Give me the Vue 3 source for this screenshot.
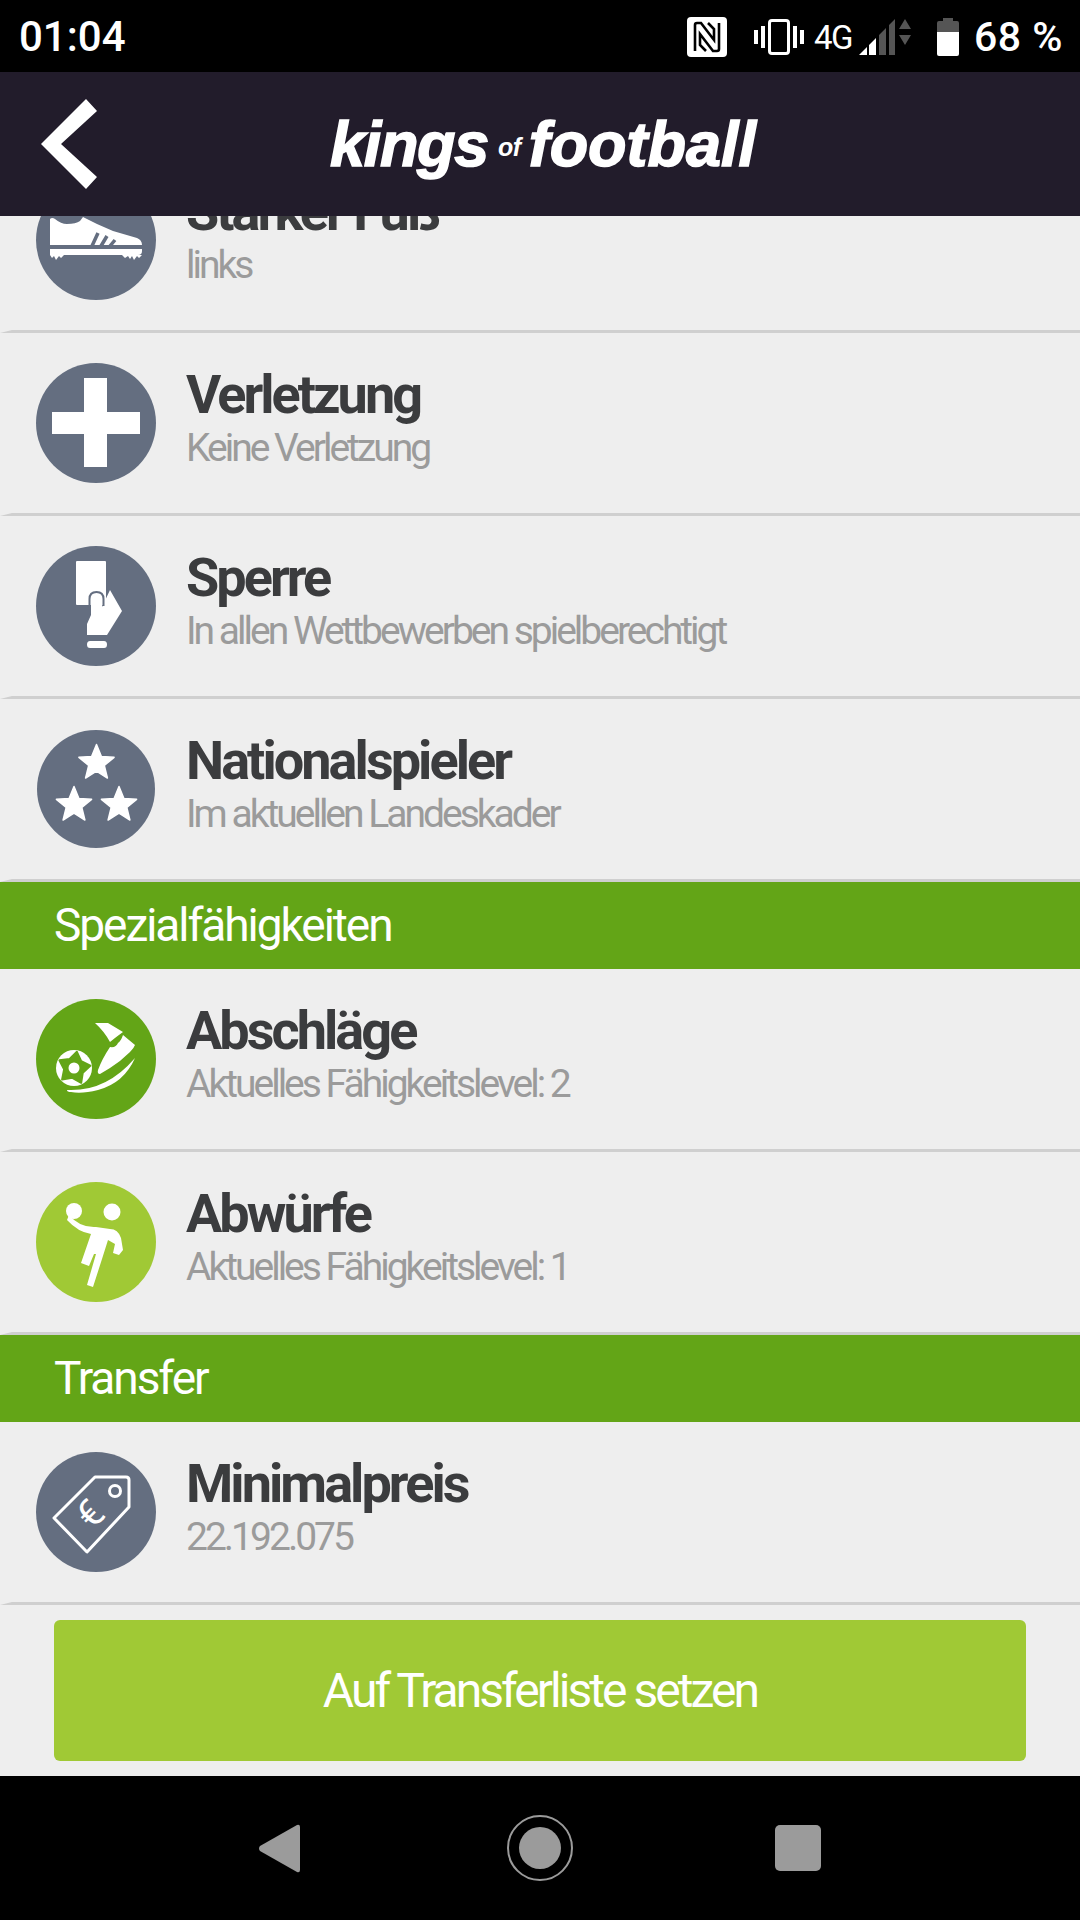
<script setup>
const star = (cx, cy, R = 18.5, r = 8.2, start = -90) => {
  const pts = []
  for (let i = 0; i < 10; i++) {
    const rad = i % 2 ? r : R
    const a = (start * Math.PI) / 180 + (i * Math.PI) / 5
    pts.push(`${(cx + rad * Math.cos(a)).toFixed(1)},${(cy + rad * Math.sin(a)).toFixed(1)}`)
  }
  return pts.join(' ')
}
const stars = [star(60.5, 34), star(38, 76), star(83, 76)]
const ballStar = star(38, 69, 16.5, 10, -80)
</script>

<template>
  <div class="screen">
    <div class="status">
      <span class="time">01:04</span>
      <div class="status-right">
        <svg class="s-nfc" width="40" height="40" viewBox="0 0 40 40">
          <rect width="40" height="40" rx="4" fill="#fff" />
          <path d="M8 34V8q0-2 2-2h4l13 17V12l-6-6M32 6v26q0 2-2 2h-4L13 17v11l6 6" fill="none" stroke="#000" stroke-width="2.6" />
        </svg>
        <svg class="s-vib" width="50" height="36" viewBox="0 0 50 36">
          <path d="M0 11h4v14H0zM7 7h4v22H7zM39 7h4v22h-4zM46 11h4v14h-4z" fill="#fff" />
          <rect x="15.500" y="1.500" width="19" height="33" rx="2.500" fill="none" stroke="#fff" stroke-width="3" />
        </svg>
        <span class="net">4G</span>
        <svg class="s-sig" width="52" height="38" viewBox="0 0 52 38">
          <path d="M0 37L8 29V37zM10 27L17 20V37H10z" fill="#fff" />
          <path d="M20 17L27 10V37H20zM30 7L36 1V37H30z" fill="#555" />
          <path d="M46 1L52 11H40zM46 27L52 17H40z" fill="#555" />
        </svg>
        <svg class="s-bat" width="22" height="38" viewBox="0 0 22 38">
          <path d="M6 0h10v3h4q2 0 2 2v9H0V5q0-2 2-2h4z" fill="#555" />
          <path d="M0 14h22v22q0 2-2 2H2q-2 0-2-2z" fill="#fff" />
        </svg>
        <span class="pct">68 %</span>
      </div>
    </div>

    <header class="topbar">
      <svg class="chev" width="56" height="90" viewBox="0 0 56 90">
        <path d="M45 0L56 12L20 45L56 78L45 90L0 45z" fill="#fff" />
      </svg>
      <div class="logo">
        <span class="lg">kings</span><span class="of">of</span><span class="lg lg2">football</span>
      </div>
    </header>

    <main class="list">
      <div class="row first">
        <div class="ico slate">
          <svg viewBox="0 0 120 120">
            <path d="M14 39Q16 37 19 39Q25 44 31 44Q40 44 44 41L47 37L61 44L77 51L101 58Q106 60 106 65H14z" fill="#fff" />
            <path d="M14 69H106V71Q106 75 102 75H14z" fill="#fff" />
            <path d="M14 75h14l-3 3-2-2-3 4-2-4-2 2-2-3zM86 75h20l-3 3-2-2-3 4-2-4-2 3-2-3-3 2z" fill="#fff" />
            <path d="M62 53l-6 13M71 56l-6 10M79 60l-5 6" stroke="#646e80" stroke-width="3.500" fill="none" />
          </svg>
        </div>
        <div class="txt"><div class="t">Starker Fuß</div><div class="s">links</div></div>
      </div>
      <div class="sep"></div>

      <div class="row">
        <div class="ico slate">
          <svg viewBox="0 0 120 120"><path d="M48 15h23v34h33v22H71v33H48V71H16V49h32z" fill="#fff" /></svg>
        </div>
        <div class="txt"><div class="t">Verletzung</div><div class="s">Keine Verletzung</div></div>
      </div>
      <div class="sep"></div>

      <div class="row">
        <div class="ico slate">
          <svg viewBox="0 0 120 120">
            <rect x="40" y="15" width="30" height="44" rx="1" fill="#fff" />
            <path d="M55 69V53q0-6 5.500-6t5.500 6v8l8-17 12 21-15 24H51V78z" fill="#fff" />
            <path d="M53.500 66V53q0-7 7-7t7 7v7" fill="none" stroke="#646e80" stroke-width="2" />
            <path d="M54 95h14q3 0 3 3.500t-3 3.500H54q-3 0-3-3.500t3-3.500z" fill="#fff" />
          </svg>
        </div>
        <div class="txt"><div class="t">Sperre</div><div class="s">In allen Wettbewerben spielberechtigt</div></div>
      </div>
      <div class="sep"></div>

      <div class="row">
        <div class="ico slate small">
          <svg viewBox="0 0 120 120">
            <polygon v-for="(p, i) in stars" :key="i" :points="p" fill="#fff" stroke="#fff" stroke-width="1.500" stroke-linejoin="round" />
          </svg>
        </div>
        <div class="txt"><div class="t">Nationalspieler</div><div class="s">Im aktuellen Landeskader</div></div>
      </div>
      <div class="sep"></div>

      <div class="band">Spezialfähigkeiten</div>

      <div class="row">
        <div class="ico green">
          <svg viewBox="0 0 120 120">
            <circle cx="38" cy="69" r="18" fill="#fff" />
            <polygon :points="ballStar" fill="#63a517" stroke="#63a517" stroke-width="2" stroke-linejoin="round" />
            <circle cx="38" cy="69" r="5.500" fill="#fff" />
            <path d="M59 24H72L87 33Q80 38 74 43Q68 32 59 24z" fill="#fff" />
            <path d="M87 36L99 46Q98 49 94 53Q85 62 74 69L64 75Q61 75 62 71Q66 60 74 48Q80 49 82 44Q85 42 87 36z" fill="#fff" />
            <path d="M31 91Q70 93 99 59Q88 84 62 91Q46 95 35 93Q31 93 31 91z" fill="#fff" />
          </svg>
        </div>
        <div class="txt"><div class="t">Abschläge</div><div class="s">Aktuelles Fähigkeitslevel: 2</div></div>
      </div>
      <div class="sep"></div>

      <div class="row">
        <div class="ico lime">
          <svg viewBox="0 0 120 120">
            <circle cx="38" cy="29" r="8" fill="#fff" />
            <circle cx="76" cy="30" r="8.500" fill="#fff" />
            <path d="M33 33Q44 46 60 45L74 47Q82 47 85 56L87 68L83 73L77 71L79 62L72 58L66 77L57 105L51 103L60 72L58 72L53 84L45 81L55 52Q42 50 31 38z" fill="#fff" />
          </svg>
        </div>
        <div class="txt"><div class="t">Abwürfe</div><div class="s">Aktuelles Fähigkeitslevel: 1</div></div>
      </div>
      <div class="sep"></div>

      <div class="band">Transfer</div>

      <div class="row">
        <div class="ico slate">
          <svg viewBox="0 0 120 120">
            <path d="M59 25H90Q93 25 93 28V55L51 100L18 66z" fill="none" stroke="#fff" stroke-width="3" stroke-linejoin="round" />
            <circle cx="79" cy="39" r="5.500" fill="none" stroke="#fff" stroke-width="3" />
            <text x="54" y="75" class="euro" transform="rotate(-45 54 62)">€</text>
          </svg>
        </div>
        <div class="txt"><div class="t">Minimalpreis</div><div class="s">22.192.075</div></div>
      </div>
      <div class="sep"></div>

      <button class="cta">Auf Transferliste setzen</button>
    </main>

    <nav class="navbar">
      <svg width="42" height="49" viewBox="0 0 42 49"><path d="M39 1Q42 0 42 3V46Q42 49 39 48L2 27Q0 24.500 2 22z" fill="#9b9b9b" /></svg>
      <svg class="home" width="66" height="66" viewBox="0 0 66 66">
        <circle cx="33" cy="33" r="32" fill="none" stroke="#9b9b9b" stroke-width="2" />
        <circle cx="33" cy="33" r="21" fill="#9b9b9b" />
      </svg>
      <svg width="46" height="46" viewBox="0 0 46 46"><rect width="46" height="46" rx="5" fill="#9b9b9b" /></svg>
    </nav>
  </div>
</template>

<style>
html, body { margin: 0; background: #000; }
</style>

<style scoped>
.screen {
  width: 1080px; height: 1920px; display: flex; flex-direction: column;
  background: #eee; font-family: Roboto, "Liberation Sans", sans-serif; overflow: hidden;
}
.status {
  height: 72px; background: #000; color: #fff; display: flex; align-items: center;
  justify-content: space-between; padding: 2px 17px 0 19px; flex: none; box-sizing: border-box;
}
.time { font-size: 42px; font-weight: 500; letter-spacing: 0; line-height: 70px; }
.status-right { display: flex; align-items: center; }
.s-nfc { margin-right: 27px; margin-top: -1px; }
.s-vib { margin-right: 10px; }
.net { font-size: 33px; width: 45px; letter-spacing: -1.500px; line-height: 1; }
.s-sig { margin-right: 26px; }
.s-bat { margin-right: 15px; }
.pct { font-size: 41px; font-weight: 500; line-height: 1; letter-spacing: 0.500px; }

.topbar {
  height: 144px; background: #221c2b; flex: none; display: flex; align-items: center;
  padding-left: 41px; position: relative; z-index: 2;
}
.chev { display: block; margin-top: -1px; }
.logo {
  margin-left: 233px; color: #fff; font-family: "Liberation Sans", Arial, sans-serif;
  font-style: italic; display: flex; align-items: baseline; margin-top: 1px; line-height: 1;
}
.lg { font-size: 63px; font-weight: 700; letter-spacing: -1.300px; -webkit-text-stroke: 1.500px #fff; }
.of { font-size: 25px; margin: 0 8px 0 10px; font-weight: 700; letter-spacing: -0.500px; transform: translateY(-10px); }
.lg2 { letter-spacing: 0; }

.list { flex: 1; display: flex; flex-direction: column; overflow: hidden; }
.row { height: 180px; display: flex; align-items: center; padding-left: 36px; gap: 30px; flex: none; box-sizing: border-box; }
.first { margin-top: -66px; }
.sep { height: 0; flex: none; border-bottom: 3px solid #cfcfcf; border-left: 12px solid transparent; }
.ico { width: 120px; height: 120px; border-radius: 50%; flex: none; }
.ico svg { display: block; width: 120px; height: 120px; }
.small { clip-path: circle(59px at 50% 50%); }
.slate { background: #646e80; }
.green { background: #63a517; }
.lime { background: #a0c935; }
.txt { display: flex; flex-direction: column; margin-top: -13px; }
.t { font-size: 54px; font-weight: 700; color: #3b3c3e; letter-spacing: -2.950px; line-height: 62px; }
.s { font-size: 39px; font-weight: 400; color: #9b9b9b; letter-spacing: -3px; line-height: 44px; }
.band {
  height: 87px; flex: none; background: #63a517; color: #fff; font-size: 46px;
  letter-spacing: -2.050px; line-height: 87px; padding-left: 54px; box-sizing: border-box;
}
.cta {
  display: block; flex: none; margin: 15px 54px 0; height: 141px; width: 972px; border: 0; border-radius: 6px;
  background: #a0c935; color: #fff; font-family: inherit; font-size: 48px; letter-spacing: -2.950px; padding: 0;
}
.euro { font-family: Roboto, sans-serif; font-size: 38px; fill: #fff; text-anchor: middle; }
.navbar {
  height: 144px; background: #000; flex: none; display: flex; align-items: center;
  padding-left: 258px; gap: 202px;
}
.home { margin-left: 5px; }
</style>
